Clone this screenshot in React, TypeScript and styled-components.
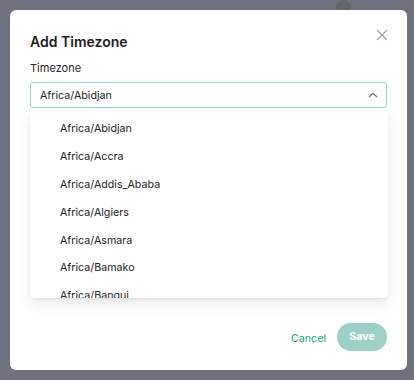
import styled, { createGlobalStyle } from "styled-components";

const GlobalStyle = createGlobalStyle`
  html, body {
    margin: 0;
    padding: 0;
    background: #6f727c;
    font-family: Inter, "Noto Sans", sans-serif;
  }
`

const Backdrop = styled.div`
  position: relative;
  width: 414px;
  height: 380px;
  padding: 10px 7px 10px 10px;
  box-sizing: border-box;
  overflow: hidden;
`

const Avatar = styled.div`
  position: absolute;
  left: 336px;
  top: 0px;
  width: 15px;
  height: 15px;
  border-radius: 50%;
  background: #63666f;
`

const Modal = styled.div`
  position: relative;
  height: 360px;
  background: #fff;
  border-radius: 6px;
  padding: 22px 20px 19px 20px;
  box-sizing: border-box;
  display: flex;
  flex-direction: column;
`

const Header = styled.div`
  display: flex;
  justify-content: space-between;
  align-items: flex-start;
`

const Title = styled.h2`
  margin: 0;
  font-size: 14px;
  line-height: 20px;
  font-weight: 600;
  color: #1c1c1e;
`

const CloseButton = styled.button`
  border: none;
  background: none;
  padding: 0;
  margin: -3px -1px 0 0;
  width: 12px;
  height: 12px;
  cursor: pointer;
  display: flex;
  color: #9a9a9f;
`

const Label = styled.div`
  margin-top: 8px;
  font-size: 11px;
  line-height: 16px;
  color: #262628;
`

const SelectWrap = styled.div`
  position: relative;
  margin-top: 6px;
`

const SelectBox = styled.div`
  height: 26px;
  border: 1px solid #8fd6c9;
  border-radius: 3px;
  display: flex;
  align-items: center;
  justify-content: space-between;
  padding: 0 8px 0 9px;
  box-sizing: border-box;
  font-size: 10.7px;
  color: #222224;
`

const Menu = styled.ul`
  position: absolute;
  top: 30px;
  left: 0;
  right: -1px;
  height: 186px;
  margin: 0;
  padding: 3px 0 0;
  list-style: none;
  background: #fff;
  border-radius: 4px;
  box-shadow: 0 6px 14px rgba(0, 0, 0, 0.09), 0 1px 3px rgba(0, 0, 0, 0.05);
  overflow: hidden;
  box-sizing: border-box;
`

const MenuItem = styled.li`
  height: 27.8px;
  display: flex;
  align-items: center;
  padding-left: 30px;
  font-size: 10.7px;
  color: #222224;
`

const Footer = styled.div`
  margin-top: auto;
  display: flex;
  justify-content: flex-end;
  align-items: center;
  gap: 11px;
`

const TextButton = styled.button`
  border: none;
  background: none;
  padding: 0;
  margin-top: 3px;
  font-family: inherit;
  font-size: 10.7px;
  color: #20a386;
  cursor: pointer;
`

const PrimaryButton = styled.button<{ disabled?: boolean }>`
  border: none;
  height: 28px;
  width: 50px;
  border-radius: 14px;
  background: ${(p) => (p.disabled ? "#9dd0c6" : "#20a386")};
  color: #fff;
  font-family: inherit;
  font-size: 10.7px;
  font-weight: 700;
  padding: 0 0 1px;
`

const zones = [
  "Africa/Abidjan",
  "Africa/Accra",
  "Africa/Addis_Ababa",
  "Africa/Algiers",
  "Africa/Asmara",
  "Africa/Bamako",
  "Africa/Bangui",
]

const App = () => {
  return (
    <>
      <GlobalStyle />
      <Backdrop>
        <Avatar />
        <Modal>
          <Header>
            <Title>Add Timezone</Title>
            <CloseButton aria-label="Close">
              <svg width="12" height="12" viewBox="0 0 12 12">
                <path d="M1 1L11 11M11 1L1 11" stroke="currentColor" strokeWidth="1.1" />
              </svg>
            </CloseButton>
          </Header>
          <Label>Timezone</Label>
          <SelectWrap>
            <SelectBox>
              <span>Africa/Abidjan</span>
              <svg width="10" height="6" viewBox="0 0 10 6">
                <path d="M1 5L5 1.3L9 5" stroke="#6b6b70" strokeWidth="1.1" fill="none" />
              </svg>
            </SelectBox>
            <Menu>
              {zones.map((z) => (
                <MenuItem key={z}>{z}</MenuItem>
              ))}
            </Menu>
          </SelectWrap>
          <Footer>
            <TextButton>Cancel</TextButton>
            <PrimaryButton disabled>Save</PrimaryButton>
          </Footer>
        </Modal>
      </Backdrop>
    </>
  )
}

export default App
